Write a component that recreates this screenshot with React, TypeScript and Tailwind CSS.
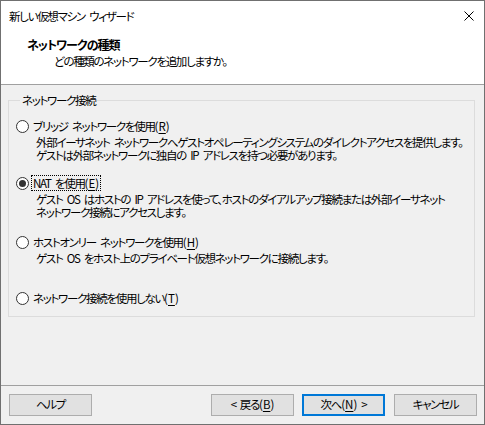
import type { ReactNode } from "react";

function Radio({ checked = false }: { checked?: boolean }) {
	return (
		<span className="flex h-[13px] w-[13px] shrink-0 items-center justify-center rounded-full border border-[#333333] bg-white">
			{checked ? (
				<span className="h-[7px] w-[7px] rounded-full bg-[#333333]" />
			) : null}
		</span>
	);
}

function Mnemonic({ text, letter }: { text: string; letter: string }) {
	return (
		<>
			{text}
			<span className="tracking-[0px]">
				(<span className="underline underline-offset-2">{letter}</span>)
			</span>
		</>
	);
}

function Option({
	label,
	checked,
	focused,
	lines,
	className,
}: {
	label: ReactNode;
	checked?: boolean;
	focused?: boolean;
	lines?: string[];
	className?: string;
}) {
	return (
		<div className={className}>
			<div className="flex h-4 items-center gap-[2px]">
				<Radio checked={checked} />
				<span
					className={
						focused
							? "border border-dotted border-black px-px leading-[14px]"
							: "border border-transparent px-px leading-[14px]"
					}
				>
					{label}
				</span>
			</div>
			{lines ? (
				<div className="mt-[2px] pl-[20px] leading-[13px] whitespace-nowrap">
					{lines.map((line) => (
						<div key={line}>{line}</div>
					))}
				</div>
			) : null}
		</div>
	);
}

function WizardButton({
	children,
	primary,
}: {
	children: ReactNode;
	primary?: boolean;
}) {
	return (
		<button
			className={
				primary
					? "flex h-[22px] w-[83px] items-center justify-center gap-[4px] border-2 border-[#0078d7] bg-[#e1e1e1] text-black"
					: "flex h-[22px] w-[83px] items-center justify-center gap-[4px] border border-[#adadad] bg-[#e1e1e1] text-black"
			}
		>
			{children}
		</button>
	);
}

export default function App() {
	return (
		<div
			className="flex h-[425px] w-[485px] flex-col border border-[#707070] bg-[#f0f0f0] text-[11.5px] tracking-[-1.3px] text-black [font-feature-settings:'palt'] [word-spacing:3px]"
			style={{ fontFamily: '"Noto Sans CJK JP", "Noto Sans", sans-serif' }}
		>
			{/* title bar */}
			<div className="flex h-[30px] items-center justify-between bg-white pl-[8px] pr-[9px]">
				<span className="leading-4">新しい仮想マシン ウィザード</span>
				<svg width="10" height="10" viewBox="0 0 10 10" className="mr-[1px]">
					<path d="M0.5 0.5 L9.5 9.5 M9.5 0.5 L0.5 9.5" stroke="#000" strokeWidth="1" />
				</svg>
			</div>

			{/* header */}
			<div className="h-[54px] border-b border-[#a0a0a0] bg-white pt-[6px] leading-4">
				<div className="pl-[26px] text-[12px] font-bold tracking-[-1px]">ネットワークの種類</div>
				<div className="pl-[53px]">どの種類のネットワークを追加しますか。</div>
			</div>

			{/* body */}
			<div className="h-[300px]">
				<fieldset className="mt-[7px] ml-[7px] mr-[9px] border border-[#dcdcdc] pt-[10px] pb-[10px] pl-[7px]">
					<legend className="ml-[4px] px-[2px] leading-4">ネットワーク接続</legend>
					<Option
						label={<Mnemonic text="ブリッジ ネットワークを使用" letter="R" />}
						lines={[
							"外部イーサネット ネットワークへゲストオペレーティングシステムのダイレクトアクセスを提供します。",
							"ゲストは外部ネットワークに独自の IP アドレスを持つ必要があります。",
						]}
					/>
					<Option
						className="mt-[13px]"
						checked
						focused
						label={<Mnemonic text="NAT を使用" letter="E" />}
						lines={[
							"ゲスト OS はホストの IP アドレスを使って、ホストのダイアルアップ接続または外部イーサネット",
							"ネットワーク接続にアクセスします。",
						]}
					/>
					<Option
						className="mt-[15px]"
						label={<Mnemonic text="ホストオンリー ネットワークを使用" letter="H" />}
						lines={["ゲスト OS をホスト上のプライベート仮想ネットワークに接続します。"]}
					/>
					<Option
						className="mt-[25px]"
						label={<Mnemonic text="ネットワーク接続を使用しない" letter="T" />}
					/>
				</fieldset>
			</div>

			{/* footer */}
			<div className="flex flex-1 items-start border-t border-[#a0a0a0] pt-[8px] pl-[8px] pr-[7px]">
				<WizardButton>ヘルプ</WizardButton>
				<div className="ml-auto flex">
					<WizardButton>
						<span>&lt;</span>
						<span>
							<Mnemonic text="戻る" letter="B" />
						</span>
					</WizardButton>
					<div className="ml-[8px]">
						<WizardButton primary>
							<span>
								<Mnemonic text="次へ" letter="N" />
							</span>
							<span>&gt;</span>
						</WizardButton>
					</div>
					<div className="ml-[9px]">
						<WizardButton>キャンセル</WizardButton>
					</div>
				</div>
			</div>
		</div>
	);
}
